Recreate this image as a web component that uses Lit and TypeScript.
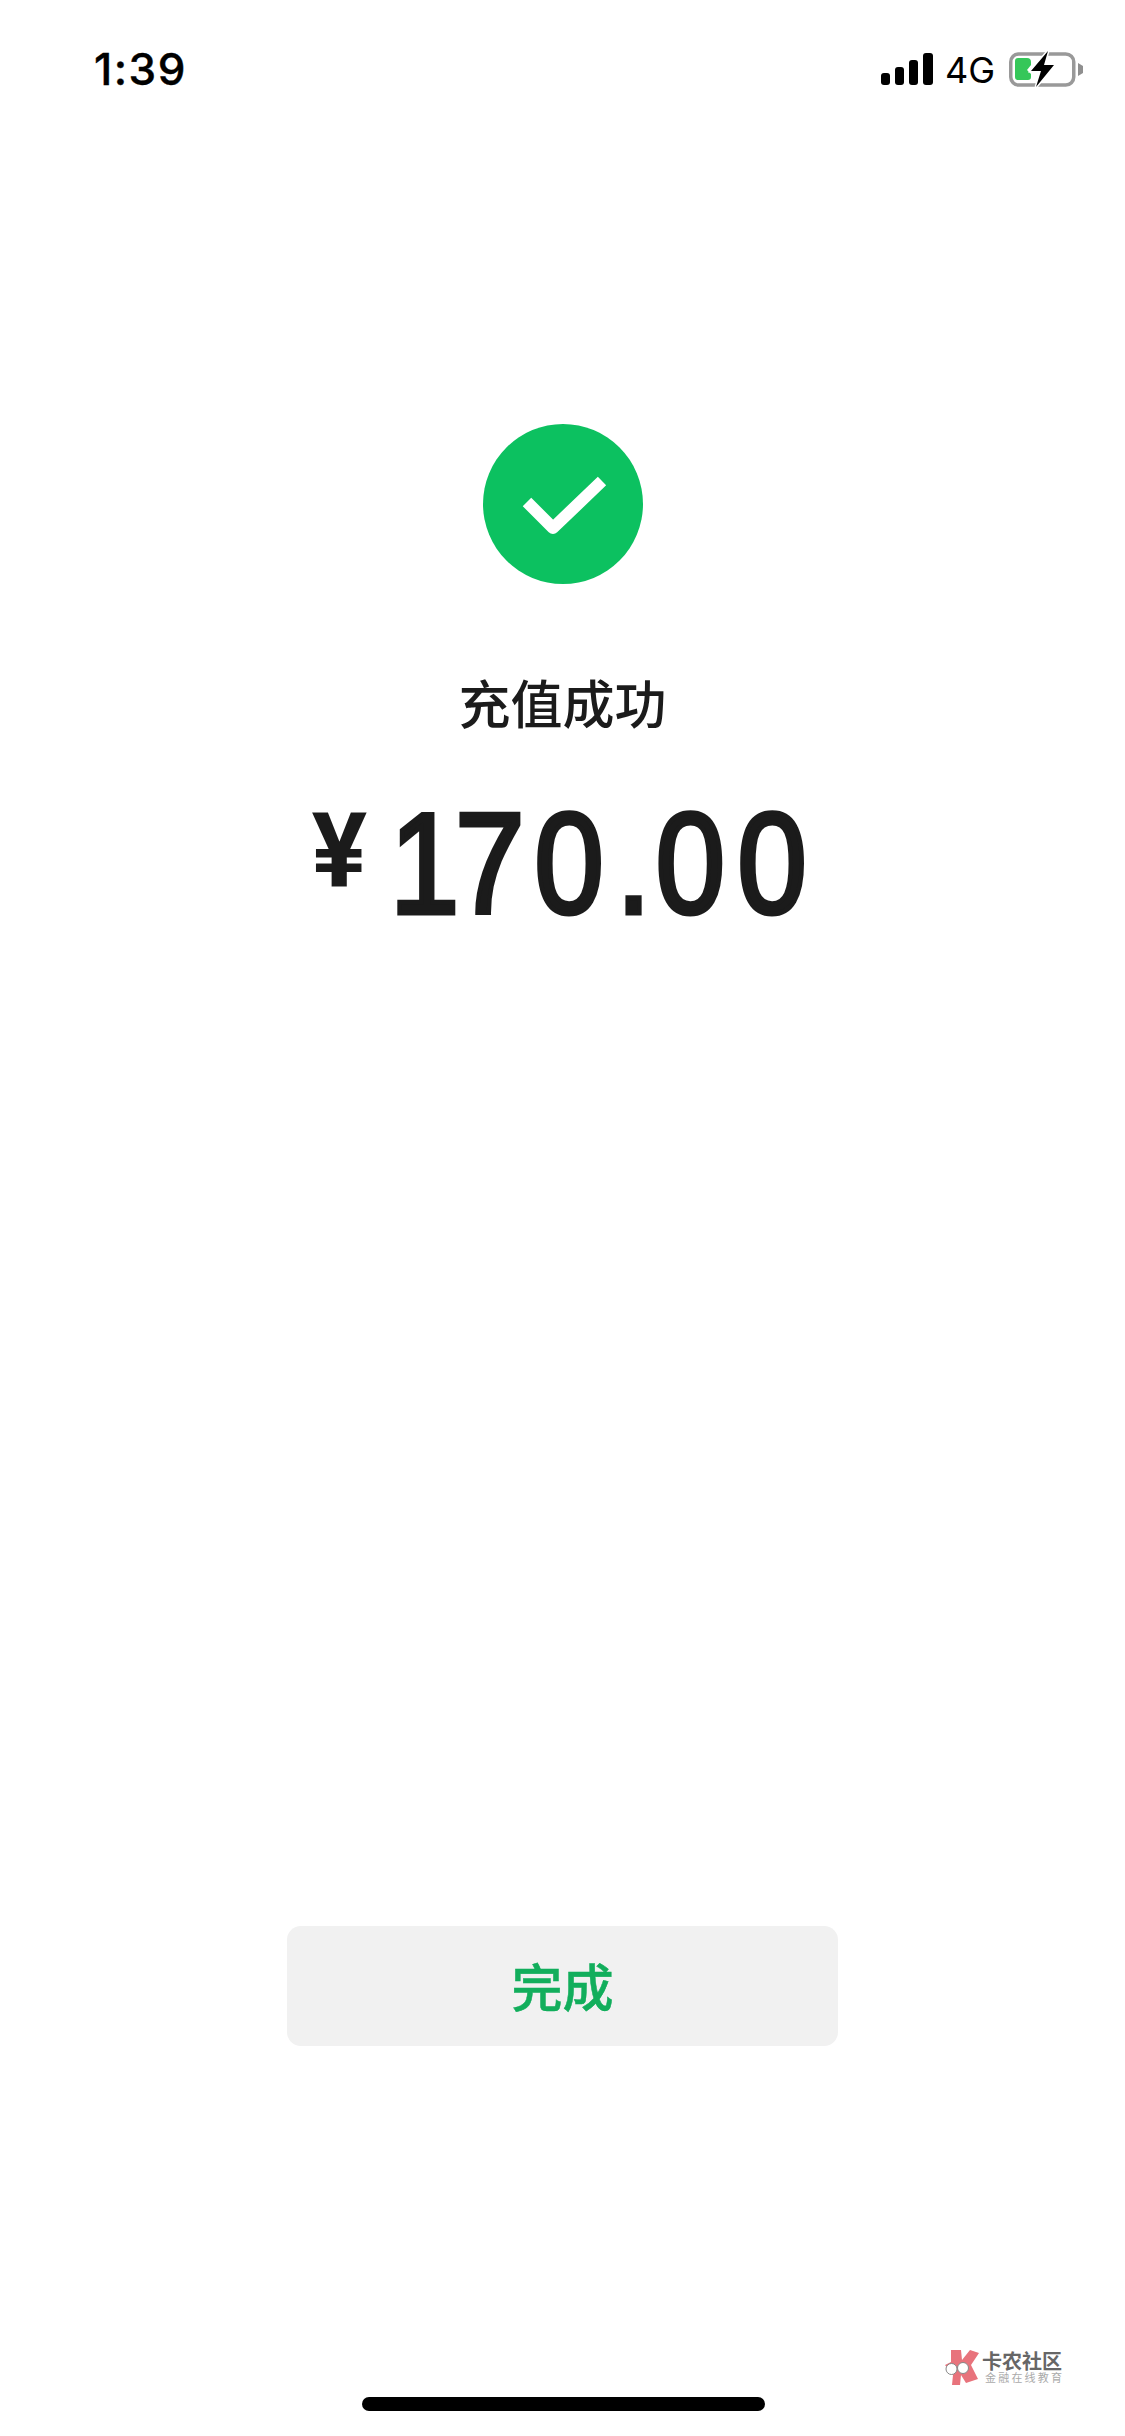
import { LitElement, html, css } from "lit";
import { customElement } from "lit/decorators.js";

@customElement("app-root")
export class AppRoot extends LitElement {
  static styles = css`
    :host {
      display: block;
      position: relative;
      width: 1125px;
      height: 2436px;
      background: #fff;
      overflow: hidden;
      font-family: "Noto Sans CJK SC", "Liberation Sans", sans-serif;
      color: #1b1b1b;
    }
    .page {
      height: 2436px;
      display: flex;
      flex-direction: column;
      align-items: center;
    }
    .status {
      box-sizing: border-box;
      width: 100%;
      height: 136px;
      padding: 41px 42px 0 94px;
      display: flex;
      justify-content: space-between;
      align-items: flex-start;
    }
    .time {
      font: 500 44px/56px Inter, "Liberation Sans", sans-serif;
      color: #000;
      letter-spacing: 1.5px;
      -webkit-text-stroke: 0.4px #000;
    }
    .indicators {
      display: flex;
      align-items: center;
      height: 56px;
    }
    .net {
      font: 400 36px/44px Inter, "Liberation Sans", sans-serif;
      color: #000;
      margin: 2px 14px 0 12px;
    }
    .check {
      display: block;
      margin-top: 288px;
      width: 160px;
      height: 160px;
    }
    .title {
      margin-top: 82px;
      font-size: 52px;
      line-height: 72px;
      font-weight: 500;
    }
    .amount {
      margin-top: 41px;
      margin-left: 5px;
      display: flex;
      align-items: flex-start;
      height: 170px;
    }
    .yen {
      font: 700 104px/120px Roboto, "Liberation Sans", sans-serif;
      margin-right: 23px;
      margin-top: 12px;
    }
    .num {
      display: block;
      width: 428px;
      white-space: nowrap;
      font: 400 143px/170px "Liberation Sans", Arial, sans-serif;
      letter-spacing: 14.5px;
      -webkit-text-stroke: 5px #1b1b1b;
      transform: scaleX(0.87);
      transform-origin: left center;
    }
    .d1 {
      letter-spacing: -4.5px;
    }
    .d7 {
      letter-spacing: 11.5px;
    }
    .dot {
      letter-spacing: 5.5px;
    }
    .done {
      margin-top: auto;
      margin-bottom: 390px;
      width: 551px;
      height: 120px;
      border: 0;
      padding: 0 0 3px;
      border-radius: 14px;
      background: #f1f1f1;
      color: #12ae5c;
      font-family: inherit;
      font-size: 51px;
      font-weight: 500;
      -webkit-text-stroke: 0.5px #12ae5c;
      display: flex;
      align-items: center;
      justify-content: center;
    }
    .home {
      position: absolute;
      left: 362px;
      top: 2397px;
      width: 403px;
      height: 14px;
      border-radius: 7px;
      background: #000;
    }
    .mark {
      position: absolute;
      left: 945px;
      top: 2350px;
      display: flex;
      align-items: flex-start;
      gap: 3px;
    }
    .mark-text {
      display: flex;
      flex-direction: column;
      margin-top: 1px;
    }
    .mark-name {
      font-size: 20px;
      line-height: 20px;
      font-weight: 700;
      color: #666;
    }
    .mark-sub {
      font-size: 11px;
      line-height: 12px;
      color: #aaa;
      letter-spacing: 2.2px;
      margin-left: 3px;
    }
  `;

  render() {
    return html`
      <div class="page">
        <div class="status">
          <span class="time">1:39</span>
          <div class="indicators">
            <svg width="52" height="32" viewBox="0 0 52 32">
              <rect x="0" y="20" width="9" height="12" rx="3" fill="#000" />
              <rect x="14" y="14" width="9" height="18" rx="3" fill="#000" />
              <rect x="28" y="7" width="9" height="25" rx="3" fill="#000" />
              <rect x="42" y="0" width="10" height="32" rx="3" fill="#000" />
            </svg>
            <span class="net">4G</span>
            <svg width="74" height="36" viewBox="0 0 74 36">
              <rect x="1.75" y="3" width="63" height="31" rx="8" fill="none" stroke="#999" stroke-width="3.5" />
              <path d="M69 12 L74 15 V22 L69 25 Z" fill="#8f8f8f" />
              <path d="M6 10 a3 3 0 0 1 3-3 H18 a4 4 0 0 1 4 4 V14 L18 19 L22 23 V26 a3 3 0 0 1 -3 3 H9 a3 3 0 0 1 -3-3 Z" fill="#35c759" />
              <path d="M39 0 L22 20 H32 L27 36 L45 14 H35 Z" fill="#000" stroke="#fff" stroke-width="3" paint-order="stroke" />
            </svg>
          </div>
        </div>
        <svg class="check" viewBox="0 0 160 160">
          <circle cx="80" cy="80" r="80" fill="#0cc160" />
          <path d="M44 78 L70 104 L119 57" fill="none" stroke="#fff" stroke-width="12" stroke-linejoin="round" />
        </svg>
        <div class="title">充值成功</div>
        <div class="amount">
          <span class="yen">¥</span>
          <span class="num"><span class="d1">1</span><span class="d7">7</span>0<span class="dot">.</span>00</span>
        </div>
        <button class="done">完成</button>
      </div>
      <div class="home"></div>
      <div class="mark">
        <svg width="34" height="35" viewBox="0 0 34 35">
          <path d="M6 0 H16 L17 10 L25 0 L34 3 L26 15 L33 29 L21 33 L16 25 L15 35 H7 L8 25 L0 15 L6 12 Z" fill="#e8737c" />
          <path d="M12 18 C14 15 17 15 18 18" fill="none" stroke="#777" stroke-width="1" />
          <circle cx="6.5" cy="19" r="5.5" fill="#fff" stroke="#888" stroke-width="1" />
          <circle cx="18" cy="18" r="5.5" fill="#fff" stroke="#888" stroke-width="1" />
        </svg>
        <div class="mark-text">
          <span class="mark-name">卡农社区</span>
          <span class="mark-sub">金融在线教育</span>
        </div>
      </div>
    `;
  }
}
